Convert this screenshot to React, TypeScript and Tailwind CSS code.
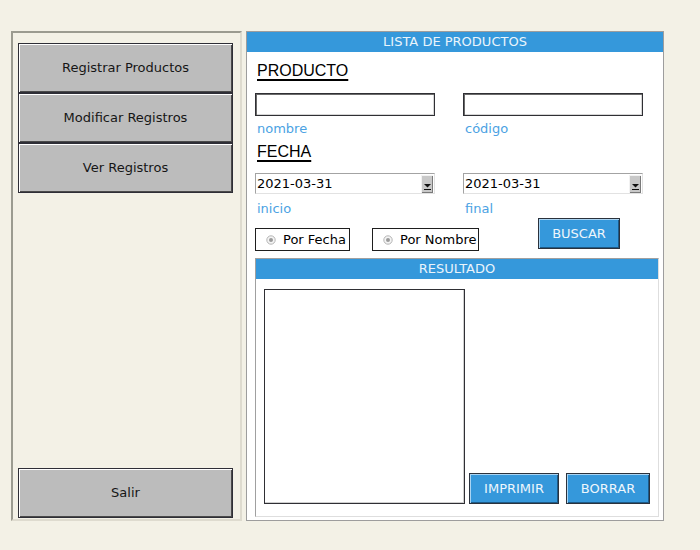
const grayBtn =
  "flex h-[50px] w-full items-center justify-center border border-[#2e2e36] bg-[#bcbcbc] text-[13px] text-[#161616] shadow-[inset_1px_1px_0_#ffffff,inset_-1px_-1px_0_#4a4a4a]";

const blueBtn =
  "flex items-center justify-center border border-[#2b323c] bg-[#3598db] text-[13px] text-[#eef6fc] shadow-[inset_1px_1px_0_#a9d4f3,inset_-1px_-1px_0_#1d5a87]";

function SideButton({ label }: { label: string }) {
  return <button className={grayBtn}>{label}</button>;
}

function Heading({ text }: { text: string }) {
  return (
    <div className="col-span-2 pl-[2px] font-['Liberation_Sans',Arial,sans-serif] text-[16px] leading-[18px] text-black underline decoration-2 underline-offset-[3px]">
      {text}
    </div>
  );
}

function Field() {
  return (
    <div className="h-[23px] w-[180px] border border-[#2f2f34] bg-white shadow-[inset_1px_1px_0_#6a6a6a,inset_-1px_-1px_0_#d6d6d6]" />
  );
}

function Hint({ text }: { text: string }) {
  return <div className="pl-[2px] text-[13px] leading-[15px] text-[#4ba2e3]">{text}</div>;
}

function DateCombo({ value }: { value: string }) {
  return (
    <div className="flex h-[21px] w-[180px] items-center justify-between border border-t-[#a3a3a3] border-l-[#a3a3a3] border-r-[#e2e2e2] border-b-[#e2e2e2] bg-white pl-[1px] pr-[1px]">
      <span className="text-[13px] leading-[15px] text-black">{value}</span>
      <div className="flex h-[18px] w-[12px] items-end justify-center bg-[#c8c8c8] pb-[3px] shadow-[inset_1px_1px_0_#f2f2f2,inset_-1px_-1px_0_#7a7a7a]">
        <svg width="7" height="6" viewBox="0 0 7 6">
          <path d="M0 0 L7 0 L3.5 3.5 Z" fill="#111" />
          <rect x="0" y="5" width="7" height="1" fill="#111" />
        </svg>
      </div>
    </div>
  );
}

function Radio({ label, width }: { label: string; width: string }) {
  return (
    <div className={`flex h-[23px] items-center border border-[#1e1e1e] bg-white pl-[10px] ${width}`}>
      <svg width="10" height="10" viewBox="0 0 10 10" className="mr-[7px]">
        <circle cx="5" cy="5" r="4.2" fill="#f4f4f4" stroke="#b5b5b5" strokeWidth="1" />
        <circle cx="5" cy="5" r="2" fill="#9a9a9a" />
      </svg>
      <span className="text-[13px] leading-[15px] text-black">{label}</span>
    </div>
  );
}

export default function App() {
  return (
    <div className="flex h-[550px] w-[700px] items-start gap-[4px] bg-[#f3f1e6] pl-[11px] pt-[31px] font-['DejaVu_Sans',sans-serif]">
      <aside className="flex h-[490px] w-[231px] flex-col border-2 border-t-[#9b9b90] border-l-[#9b9b90] border-r-[#dedbcf] border-b-[#dedbcf] pb-[1px] pl-[5px] pr-[7px] pt-[10px]">
        <SideButton label="Registrar Productos" />
        <SideButton label="Modificar Registros" />
        <SideButton label="Ver Registros" />
        <div className="flex-1" />
        <SideButton label="Salir" />
      </aside>

      <section className="flex h-[490px] w-[418px] flex-col border border-[#9d9d9d] bg-white">
        <div className="h-[20px] bg-[#3598db] text-center text-[13px] leading-[20px] text-[#eaf4fb]">
          LISTA DE PRODUCTOS
        </div>

        <div className="flex flex-col pl-[8px]">
          <div className="grid grid-cols-[180px_180px] gap-x-[28px] pt-[10px]">
            <Heading text="PRODUCTO" />
            <div className="mt-[13px]">
              <Field />
            </div>
            <div className="mt-[13px]">
              <Field />
            </div>
            <div className="mt-[5px]">
              <Hint text="nombre" />
            </div>
            <div className="mt-[5px]">
              <Hint text="código" />
            </div>
            <div className="col-span-2 mt-[7px]">
              <Heading text="FECHA" />
            </div>
            <div className="mt-[12px]">
              <DateCombo value="2021-03-31" />
            </div>
            <div className="mt-[12px]">
              <DateCombo value="2021-03-31" />
            </div>
            <div className="mt-[7px]">
              <Hint text="inicio" />
            </div>
            <div className="mt-[7px]">
              <Hint text="final" />
            </div>
          </div>

          <div className="mt-[2px] flex h-[33px]">
            <div className="self-end">
              <Radio label="Por Fecha" width="w-[95px]" />
            </div>
            <div className="ml-[22px] self-end">
              <Radio label="Por Nombre" width="w-[107px]" />
            </div>
            <button className={`${blueBtn} ml-[59px] h-[31px] w-[82px] self-start`}>BUSCAR</button>
          </div>

          <div className="mt-[7px] flex h-[259px] w-[404px] flex-col border border-t-[#a0a0a0] border-l-[#a0a0a0] border-r-[#dedede] border-b-[#dedede]">
            <div className="h-[20px] bg-[#3598db] text-center text-[13px] leading-[20px] text-[#eaf4fb]">
              RESULTADO
            </div>
            <div className="flex flex-1 items-end pb-[12px] pl-[8px] pr-[8px] pt-[10px]">
              <div className="h-full w-[201px] border border-[#2f2f34] bg-white shadow-[inset_-1px_-1px_0_#cfcfcf]" />
              <button className={`${blueBtn} ml-[4px] h-[31px] w-[90px]`}>IMPRIMIR</button>
              <button className={`${blueBtn} ml-[7px] h-[31px] w-[84px]`}>BORRAR</button>
            </div>
          </div>
        </div>
      </section>
    </div>
  );
}
